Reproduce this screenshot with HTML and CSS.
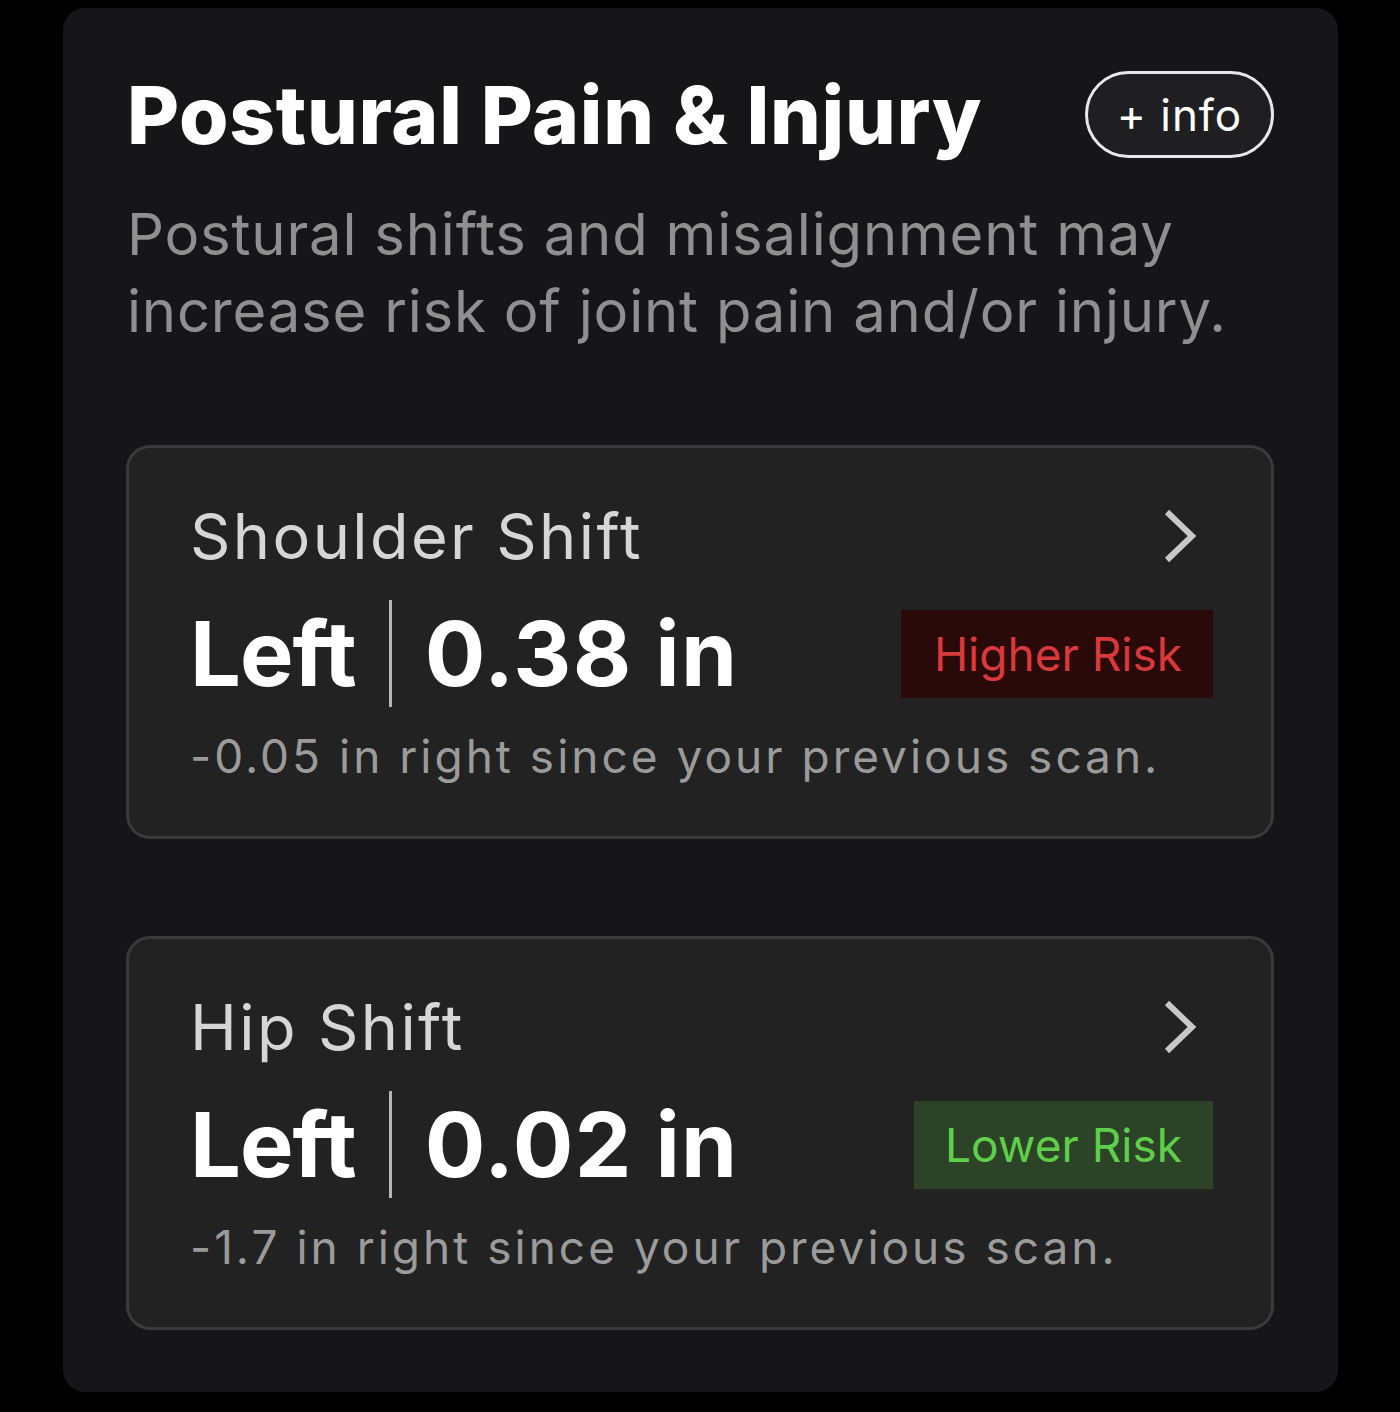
FILE: index.html
```html
<!DOCTYPE html>
<html lang="en">

<head>
    <meta charset="UTF-8">
    <meta name="viewport" content="width=device-width, initial-scale=1.0">
    <title>Postural Pain &amp; Injury</title>
    <link rel="stylesheet" href="styles.css">
</head>

<body>
    <section class="panel">
        <div class="panel-header">
            <h2 class="panel-title">Postural Pain &amp; Injury</h2>
            <button class="info-button">+ info</button>
        </div>
        <p class="panel-desc">Postural shifts and misalignment may increase risk of joint pain and/or injury.</p>

        <!-- one card per measured shift -->
        <div class="shift-card">
            <div class="shift-top">
                <span class="shift-name">Shoulder Shift</span>
                <svg class="chevron" width="34" height="54" viewBox="0 0 34 54">
                    <polyline points="4,3 29,27 4,51" />
                </svg>
            </div>
            <div class="shift-main">
                <span class="shift-side">Left</span>
                <span class="shift-divider"></span>
                <span class="shift-value">0.38 in</span>
                <span class="risk-badge risk-high">Higher Risk</span>
            </div>
            <div class="shift-change">-0.05 in right since your previous scan.</div>
        </div>

        <div class="shift-card">
            <div class="shift-top">
                <span class="shift-name">Hip Shift</span>
                <svg class="chevron" width="34" height="54" viewBox="0 0 34 54">
                    <polyline points="4,3 29,27 4,51" />
                </svg>
            </div>
            <div class="shift-main">
                <span class="shift-side">Left</span>
                <span class="shift-divider"></span>
                <span class="shift-value">0.02 in</span>
                <span class="risk-badge risk-low">Lower Risk</span>
            </div>
            <div class="shift-change">-1.7 in right since your previous scan.</div>
        </div>
    </section>
</body>

</html>
```

FILE: styles.css
```css
body {
    margin: 0;
    background-color: #000;
    font-family: Inter, "Noto Sans", sans-serif;
}

.panel {
    width: 1275px;
    box-sizing: border-box;
    margin: 8px 0 20px 63px;
    padding: 63px 64px 62px 63px;
    background-color: #161618;
    border-radius: 22px;
}

.panel-header {
    display: flex;
    align-items: center;
    justify-content: space-between;
    height: 87px;
}

.panel-title {
    margin: 0 0 0 1px;
    color: #fff;
    font-size: 80px;
    font-weight: 800;
    letter-spacing: 0.7px;
    line-height: 87px;
}

.info-button {
    height: 87px;
    width: 189px;
    box-sizing: border-box;
    border: 3px solid #e8e8e8;
    border-radius: 44px;
    background-color: #1f1f21;
    color: #fff;
    font-family: inherit;
    font-size: 44px;
    letter-spacing: 1px;
    padding: 0;
    cursor: pointer;
}

.panel-desc {
    margin: 38px 0 95px 1px;
    color: #8f8f8f;
    font-size: 58px;
    line-height: 77px;
    letter-spacing: 0.8px;
    max-width: 1110px;
}

.shift-card {
    box-sizing: border-box;
    height: 394px;
    margin-bottom: 97px;
    padding: 56px 58px 0 61px;
    background-color: #222222;
    border: 3px solid #3a3a3a;
    border-radius: 24px;
}

.shift-card:last-child {
    margin-bottom: 0;
}

.shift-top {
    display: flex;
    align-items: center;
    justify-content: space-between;
    height: 64px;
}

.shift-name {
    color: #d6d6d6;
    font-size: 63px;
    line-height: 64px;
    letter-spacing: 2.4px;
}

.chevron {
    margin-right: 16px;
    fill: none;
    stroke: #c8c8c8;
    stroke-width: 6;
}

.shift-main {
    display: flex;
    align-items: center;
    height: 107px;
    margin-top: 32px;
}

.shift-side,
.shift-value {
    color: #fff;
    font-size: 90px;
    font-weight: 700;
    line-height: 107px;
    letter-spacing: -1px;
}

.shift-value {
    letter-spacing: 1.3px;
}

.shift-divider {
    width: 3px;
    height: 107px;
    margin: 0 33px;
    background-color: #b5b5b5;
}

.risk-badge {
    margin-left: auto;
    height: 88px;
    padding: 0 31px 0 33px;
    display: flex;
    align-items: center;
    font-size: 46px;
}

.risk-high {
    background-color: #2a0909;
    color: #d9393b;
}

.risk-low {
    background-color: #2c4328;
    color: #5fcf4a;
    padding-left: 31px;
}

.shift-change {
    margin-top: 21px;
    color: #9b9b9b;
    font-size: 46px;
    line-height: 56px;
    letter-spacing: 3px;
}
```
